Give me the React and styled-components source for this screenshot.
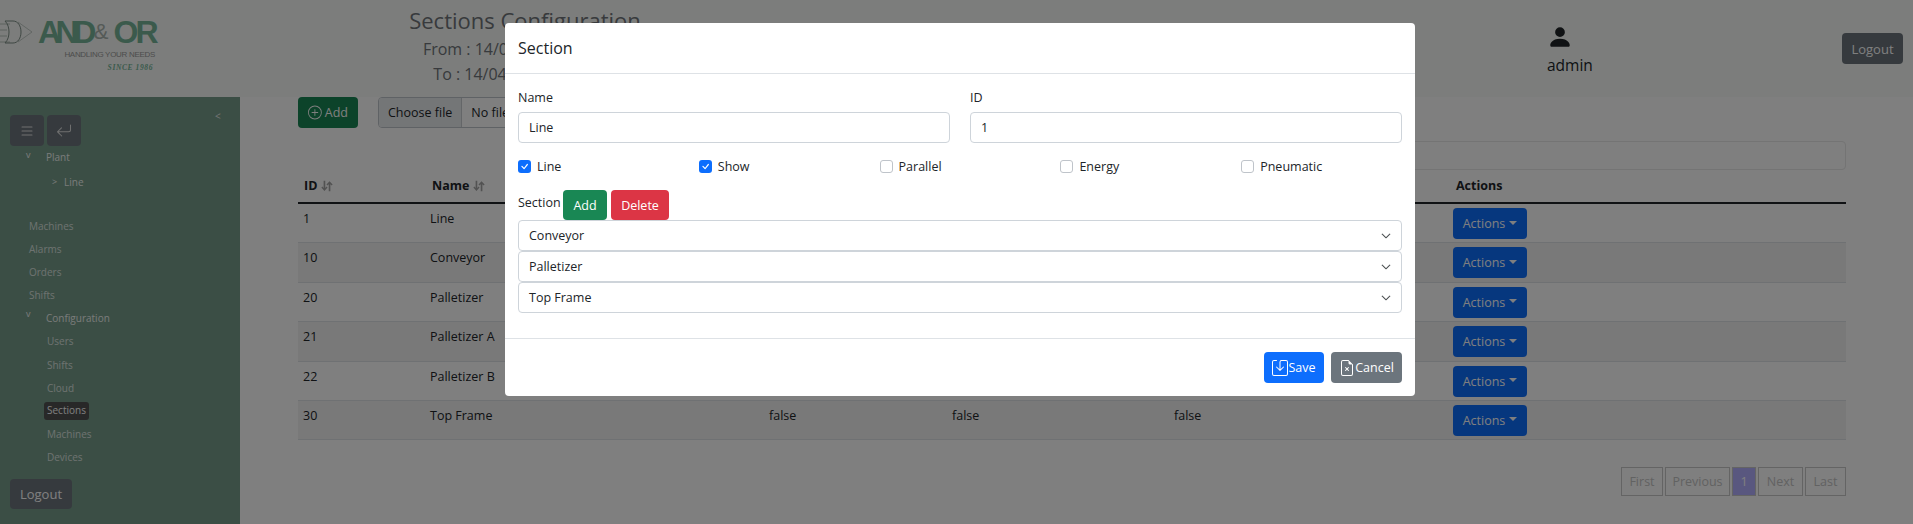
import React from "react";
import styled, { createGlobalStyle } from "styled-components";
import { BsPlusCircle, BsPersonFill, BsArrowReturnLeft, BsList, BsSave, BsFileEarmarkX, BsChevronDown, BsCheck } from "react-icons/bs";

const Global = createGlobalStyle`
  html, body { margin: 0; padding: 0; height: 100%; background: #fff; overflow: hidden; }
  body { font-family: "Open Sans", "Noto Sans", sans-serif; font-size: 12.5px; color: #212529; }
  * { box-sizing: border-box; }
`;
const Page = styled.div`width: 1913px; height: 524px; display: flex; flex-direction: column; position: relative; overflow: hidden;`;
const Header = styled.header`height: 97px; flex: none; background: #f8fbf8; display: flex; align-items: flex-start;`;
const Logo = styled.div`width: 160px; padding-top: 20px; flex: none; display: flex; flex-direction: column; align-items: flex-end;`;
const LogoTop = styled.div`display: flex; align-items: center; height: 24px; width: 160px;`;
const LogoWord = styled.span`font-family: "Liberation Sans", sans-serif; font-weight: 700; font-size: 32px; line-height: 24px; letter-spacing: ${p => p.$sp}; color: #76b598; margin-left: ${p => p.$ml || 0};`;
const LogoAmp = styled.span`font-family: "Liberation Sans", sans-serif; font-weight: 400; font-size: 22px; line-height: 24px; color: #aab4ae; margin: 0 5px 0 3px;`;
const LogoSub = styled.div`font-family: "Liberation Sans", sans-serif; font-size: 8px; letter-spacing: -.3px; color: #9a9a9a; line-height: 9px; margin: 6px 5px 0 0;`;
const LogoSince = styled.div`font-family: "Liberation Serif", serif; font-style: italic; font-size: 7.5px; font-weight: 700; letter-spacing: .6px; color: #76b598; line-height: 9px; margin: 4px 7px 0 0;`;
const TitleBlock = styled.div`width: 400px; margin-left: 165px; flex: none; text-align: center; color: #70757a;`;
const Title = styled.div`font-size: 22px; line-height: 26px; margin-top: 7px; font-weight: 500;`;
const Range = styled.div`font-size: 16px; line-height: 25px; margin-top: ${p => p.$mt || 0};`;
const UserBlock = styled.div`margin-left: 822px; width: 60px; padding-top: 24px; color: #212529; flex: none;`;
const UserName = styled.div`font-size: 15.5px; line-height: 22px; font-weight: 500; margin-top: 4px;`;
const Btn = styled.button`
  font: inherit; border: 0; border-radius: 4px; height: ${p => p.$h || "31px"}; padding: 0 ${p => p.$px || "10px"}; width: ${p => p.$w || "auto"};
  background: ${p => p.$bg}; color: #fff; display: inline-flex; align-items: center; justify-content: center; gap: ${p => p.$gap || "0"}; flex: none; font-size: ${p => p.$fs || "12.5px"};
`;
const HeaderLogout = styled(Btn)`margin: 33px 0 0 235px; width: 61px; font-size: 13px;`;
const Body = styled.div`flex: 1; display: flex; min-height: 0;`;
const Side = styled.aside`width: 240px; flex: none; background: #769c8a; display: flex; flex-direction: column; padding: 18px 0 0 0; position: relative;`;
const Collapse = styled.span`position: absolute; left: 215px; top: 11px; font-size: 10px; color: #e9e9e9; line-height: 16px;`;
const SideBtns = styled.div`display: flex; gap: 3px; padding-left: 10px;`;
const SideBtn = styled(Btn)`width: 34px; padding: 0; color: #dfdfdf; font-size: 16px;`;
const Nav = styled.nav`display: flex; flex-direction: column; font-size: 10px; line-height: 17px;`;
const NavItem = styled.div`
  height: ${p => p.$h || "23.1px"}; padding-left: ${p => p.$pl || "29px"}; display: flex; align-items: flex-start; padding-top: 3px; position: relative; margin-top: ${p => p.$mt || 0};
  color: ${p => p.$dim ? "#dde5e0" : "#f3f6f4"};
`;
const Caret = styled.span`position: absolute; left: ${p => p.$l}; top: ${p => p.$t}; font-size: 9px; line-height: 10px;`;
const Active = styled.span`background: #505050; color: #fff; border-radius: 3px; margin: -1px 0 0 -3px; padding: 0 3px; height: 18px; display: inline-block;`;
const SideLogout = styled(Btn)`position: absolute; left: 10px; top: 382px; width: 62px; height: 30px; font-size: 13px;`;
const Main = styled.main`flex: 1; padding: 0 0 0 58px; min-width: 0; width: 1673px;`;
const Tools = styled.div`display: flex; align-items: center; height: 31px; gap: 20px;`;
const FileInput = styled.div`display: flex; width: 400px; height: 31px; border: 1px solid #bfc4ca; border-radius: 4px; overflow: hidden; background: #fff;`;
const FileBtn = styled.span`background: #e9ecef; border-right: 1px solid #c8ccd0; padding: 0 9px; display: flex; align-items: center;`;
const FileName = styled.span`padding: 0 9px; display: flex; align-items: center;`;
const SearchRow = styled.div`display: flex; justify-content: flex-end; width: 1548px; margin-top: 13px;`;
const Search = styled.div`width: 774px; height: 29px; border: 1px solid #e8e8e8; border-radius: 4px; background: #fff;`;
const Table = styled.table`width: 1548px; table-layout: fixed; border-collapse: collapse;`;
const Th = styled.th`text-align: left; font-weight: 700; height: 33px; padding: 5px 6px 4px ${p => p.$pl || "6px"}; line-height: 21px; border-bottom: 2px solid #212529; color: #212529; vertical-align: top; white-space: nowrap;`;
const Sort = styled.svg`width: 12px; height: 12px; margin-left: 4px; vertical-align: -2px;`;
const Tr = styled.tr`background: ${p => p.$odd ? "#f2f2f2" : "#fff"};`;
const Td = styled.td`padding: ${p => p.$btn ? "4px 6px 3.4px" : "4px 5px 0"}; line-height: 21px; height: 39.4px; vertical-align: top; border-bottom: 1px solid #dee2e6;`;
const NameTd = styled(Td)`padding-left: 6px;`;
const ActionBtn = styled(Btn)`width: 74px; gap: 4px; background: #0d6efd; color: #fff; &::after { content: ""; border-top: 4px solid #fff; border-left: 4px solid transparent; border-right: 4px solid transparent; display: inline-block; margin-top: -2px; }`;
const Pager = styled.div`display: flex; justify-content: flex-end; gap: 2px; width: 1548px; margin-top: 27px;`;
const PageBtn = styled.span`height: 29px; width: ${p => p.$w}; border: 1px solid #c8c8c8; display: flex; align-items: center; justify-content: center; color: ${p => p.$on ? "#fff" : "#c4c4c4"}; background: ${p => p.$on ? "#b2aeff" : "#fff"};`;
const Backdrop = styled.div`position: absolute; inset: 0; background: rgba(0,0,0,.5);`;
const Modal = styled.div`position: absolute; left: 505px; top: 23px; width: 910px; height: 373px; background: #fff; border-radius: 4px; display: flex; flex-direction: column;`;
const MHead = styled.div`height: 51px; flex: none; border-bottom: 1px solid #dee2e6; padding-left: 13px; display: flex; align-items: center; font-size: 16px; font-weight: 500; color: #212529;`;
const MBody = styled.div`flex: 1; padding: 13px 13px 0 13px; display: flex; flex-direction: column; color: #212529;`;
const Fields = styled.div`display: grid; grid-template-columns: 432px 432px; column-gap: 20px;`;
const Label = styled.label`display: block; line-height: 21px; height: 25px; color: #212529;`;
const Input = styled.div`height: 31px; border: 1px solid #ced4da; border-radius: 4px; padding: 0 10px; display: flex; align-items: center; color: #212529; background: #fff;`;
const Checks = styled.div`display: grid; grid-template-columns: repeat(5, 180.8px); margin-top: 13px; height: 21px; align-items: center;`;
const Check = styled.div`display: flex; align-items: center; gap: 6px;`;
const Box = styled.span`width: 13px; height: 13px; border-radius: 3px; display: flex; align-items: center; justify-content: center; background: ${p => p.$on ? "#0d6efd" : "#fff"}; border: ${p => p.$on ? "0" : "1px solid #bfc4ca"}; color: #fff; font-size: 13px;`;
const SectionHead = styled.div`display: flex; align-items: flex-start; gap: 4px; margin-top: 13px; height: 30px;`;
const SectionLabel = styled.span`line-height: 21px; margin-top: 2px; width: 41px; white-space: nowrap;`;
const Select = styled.div`height: 31px; border: 1px solid #ced4da; border-radius: 4px; padding: 0 10px; display: flex; align-items: center; justify-content: space-between; svg { font-size: 10px; stroke-width: .6; }`;
const MFoot = styled.div`height: 58px; flex: none; border-top: 1px solid #dee2e6; display: flex; justify-content: flex-end; align-items: center; gap: 7px; padding: 0 13px;`;

const rows = [["1","Line"],["10","Conveyor"],["20","Palletizer"],["21","Palletizer A"],["22","Palletizer B"],["30","Top Frame"]];
const SortIcon = () => <Sort viewBox="0 0 16 16" fill="#a4a4a4"><path d="M3.500 1h2.200v9.500l1.800-1.800 1.200 1.300L4.600 14.500.5 10l1.200-1.300 1.800 1.800zM11.400 1.500l4.100 4.500-1.200 1.300-1.800-1.800V15h-2.200V5.500L8.500 7.300 7.300 6z"/></Sort>;
const sideA = ["Machines","Alarms","Orders","Shifts"];
const sideB = ["Users","Shifts","Cloud","Sections","Machines","Devices"];
const pages = [["First","42px"],["Previous","65px"],["1","24px",true],["Next","45px"],["Last","41px"]];
const checks = [["Line",true],["Show",true],["Parallel",false],["Energy",false],["Pneumatic",false]];

export default function App() {
  return (
    <Page>
      <Global />
      <Header>
        <Logo>
          <LogoTop>
            <svg width="34" height="24" viewBox="0 0 34 24" fill="none" strokeWidth="1" style={{flex:"none"}}>
              <path d="M0 4h10M0 10h7M0 16h7M0 22h10" stroke="#b9c4be"/>
              <path d="M5 1h8c5 0 8 5 8 11s-3 11-8 11H5c3-3 4-7 4-11S8 4 5 1z" stroke="#7f8f87"/>
              <path d="M18 2 32 12 18 22" stroke="#c4ccc8"/>
            </svg>
            <LogoWord $sp="-5.5px" $ml="4px">AND</LogoWord>
            <LogoAmp>&amp;</LogoAmp>
            <LogoWord $sp="-3px">OR</LogoWord>
          </LogoTop>
          <LogoSub>HANDLING YOUR NEEDS</LogoSub>
          <LogoSince>SINCE 1986</LogoSince>
        </Logo>
        <TitleBlock>
          <Title>Sections Configuration</Title>
          <Range $mt="4px">From : 14/04/2025 00:00:00</Range>
          <Range>To : 14/04/2025 00:00:00</Range>
        </TitleBlock>
        <UserBlock>
          <BsPersonFill size={26} style={{display:"block"}} />
          <UserName>admin</UserName>
        </UserBlock>
        <HeaderLogout $bg="#6c757d">Logout</HeaderLogout>
      </Header>
      <Body>
        <Side>
          <Collapse>&lt;</Collapse>
          <SideBtns>
            <SideBtn $bg="#6c757d"><BsList /></SideBtn>
            <SideBtn $bg="#6c757d"><BsArrowReturnLeft /></SideBtn>
          </SideBtns>
          <Nav>
            <NavItem $pl="46px" $h="25px"><Caret $l="26px" $t="4px">v</Caret>Plant</NavItem>
            <NavItem $pl="64px" $h="44px"><Caret $l="52px" $t="6px">&gt;</Caret>Line</NavItem>
            {sideA.map(s => <NavItem key={s} $dim>{s}</NavItem>)}
            <NavItem $pl="46px"><Caret $l="26px" $t="2px">v</Caret>Configuration</NavItem>
            {sideB.map(s => <NavItem key={s} $pl="47px" $dim>{s === "Sections" ? <Active>{s}</Active> : s}</NavItem>)}
          </Nav>
          <SideLogout $bg="#6c757d">Logout</SideLogout>
        </Side>
        <Main>
          <Tools>
            <Btn $bg="#198754" $gap="3px" $w="60px"><BsPlusCircle size={15} />Add</Btn>
            <FileInput><FileBtn>Choose file</FileBtn><FileName>No file chosen</FileName></FileInput>
          </Tools>
          <SearchRow><Search /></SearchRow>
          <Table>
            <colgroup><col width="126"/><col width="340"/><col width="183"/><col width="222"/><col width="278"/><col width="399"/></colgroup>
            <thead><tr>
              <Th>ID<SortIcon /></Th><Th $pl="8px">Name<SortIcon /></Th><Th>Parallel</Th><Th>Energy</Th><Th>Pneumatic</Th><Th $pl="9px">Actions</Th>
            </tr></thead>
            <tbody>
              {rows.map((r,i) => (
                <Tr key={r[0]} $odd={i%2===1}>
                  <Td>{r[0]}</Td><NameTd>{r[1]}</NameTd><Td>false</Td><Td>false</Td><Td>false</Td>
                  <Td $btn><ActionBtn>Actions</ActionBtn></Td>
                </Tr>
              ))}
            </tbody>
          </Table>
          <Pager>{pages.map(p => <PageBtn key={p[0]} $w={p[1]} $on={p[2]}>{p[0]}</PageBtn>)}</Pager>
        </Main>
      </Body>
      <Backdrop />
      <Modal>
        <MHead>Section</MHead>
        <MBody>
          <Fields>
            <div><Label>Name</Label><Input>Line</Input></div>
            <div><Label>ID</Label><Input>1</Input></div>
          </Fields>
          <Checks>
            {checks.map(c => <Check key={c[0]}><Box $on={c[1]}>{c[1] && <BsCheck />}</Box>{c[0]}</Check>)}
          </Checks>
          <SectionHead>
            <SectionLabel>Section</SectionLabel>
            <Btn $bg="#198754" $w="44px" $h="30px">Add</Btn>
            <Btn $bg="#dc3545" $w="58px" $h="30px">Delete</Btn>
          </SectionHead>
          <div>
            {["Conveyor","Palletizer","Top Frame"].map(s => <Select key={s}>{s}<BsChevronDown /></Select>)}
          </div>
        </MBody>
        <MFoot>
          <Btn $bg="#0d6efd" $w="60px" $px="0"><BsSave size={16} />Save</Btn>
          <Btn $bg="#6c757d" $w="71px" $px="0"><BsFileEarmarkX size={16} />Cancel</Btn>
        </MFoot>
      </Modal>
    </Page>
  );
}
